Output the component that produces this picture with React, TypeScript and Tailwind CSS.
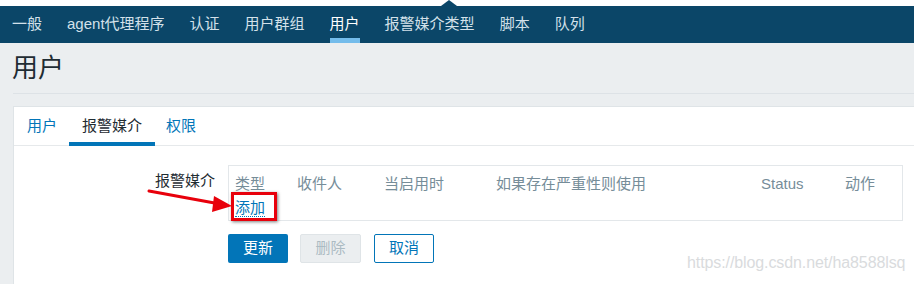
const navItems = ["一般", "agent代理程序", "认证", "用户群组", "用户", "报警媒介类型", "脚本", "队列"];

const font = { fontFamily: '"Liberation Sans", "Noto Sans CJK SC", sans-serif' };

export default function App() {
  return (
    <div className="relative w-[914px] h-[284px] overflow-hidden bg-[#ebeef0]" style={font}>
      {/* top strip */}
      <div className="relative h-[6px] bg-white">
        <div className="absolute left-[441px] top-0 w-0 h-0 border-l-[8px] border-r-[8px] border-b-[6px] border-l-transparent border-r-transparent border-b-[#0b4668]" />
      </div>

      {/* nav */}
      <nav className="flex h-[37px] items-stretch gap-[25px] bg-[#0b4668] pl-[12px]">
        {navItems.map((item) => {
          const active = item === "用户";
          return (
            <div key={item} className="relative flex items-center text-[15px] text-[#d3e1ea]">
              <span className={active ? "text-white" : ""}>{item}</span>
              {active && <div className="absolute bottom-0 left-0 right-0 h-[5px] bg-[#74bceb]" />}
            </div>
          );
        })}
      </nav>

      {/* header */}
      <div className="ml-[13px] h-[51px] border-b border-[#dde2e6] flex items-center">
        <h1 className="text-[26px] leading-none text-[#1f2c33] -ml-[1px]">用户</h1>
      </div>

      {/* panel */}
      <div className="ml-[13px] mt-[12px] h-[200px] bg-white border-l border-t border-[#dfe4e7]">
        <div className="flex h-[39px] border-b border-[#e6e9eb] pl-[13px] text-[15px]">
          <div className="flex items-center text-[#0275b8] pr-[12px]">用户</div>
          <div className="relative flex items-center px-[13px] text-[#1f2c33]">
            报警媒介
            <div className="absolute bottom-[-1px] left-0 right-0 h-[4px] bg-[#0275b8]" />
          </div>
          <div className="flex items-center pl-[11px] text-[#0275b8]">权限</div>
        </div>

        <div className="flex pt-[19px] pr-[11px]">
          <div className="w-[202px] shrink-0 pr-[1px] pt-[5px] text-right text-[15px] text-[#1f2c33]">报警媒介</div>
          <div className="ml-[12px] flex-1 h-[56px] border border-[#e3e7ea] pl-[6px] pt-[7px] text-[15px]">
            <div className="grid grid-cols-[62px_87px_112px_265px_84px_1fr] text-[#768d99]">
              <span>类型</span>
              <span>收件人</span>
              <span>当启用时</span>
              <span>如果存在严重性则使用</span>
              <span>Status</span>
              <span>动作</span>
            </div>
            <div className="mt-[1px]">
              <span className="text-[#0275b8] border-b border-dotted border-[#0275b8] leading-[19px]">添加</span>
            </div>
          </div>
        </div>

        <div className="flex gap-[12px] pl-[214px] pt-[13px] text-[15px]">
          <button className="w-[60px] h-[29px] rounded-[2px] bg-[#0275b8] text-white">更新</button>
          <button className="w-[61px] h-[29px] rounded-[2px] bg-[#ebeef0] border border-[#dfe4e7] text-[#acbbc3]">删除</button>
          <button className="w-[60px] h-[29px] rounded-[2px] bg-white border border-[#0275b8] text-[#0275b8] ml-[1px]">取消</button>
        </div>
      </div>

      {/* annotation: red box + arrow */}
      <div className="absolute left-[231px] top-[192px] w-[46px] h-[29px] border-[3px] border-[#e8000b] shadow-[1px_1px_3px_rgba(0,0,0,0.5)]" />
      <svg className="absolute left-[140px] top-[180px]" width="100" height="40" viewBox="0 0 100 40">
        <line x1="9" y1="11" x2="80" y2="24" stroke="#e8000b" strokeWidth="3" strokeLinecap="round" />
        <polygon points="92,26 74,16 72,32" fill="#e8000b" />
      </svg>

      {/* watermark */}
      <div className="absolute left-[687px] top-[251px] text-[16px] text-[#d9dbdd] tracking-[-0.1px]">https://blog.csdn.net/ha8588lsq</div>
    </div>
  );
}
